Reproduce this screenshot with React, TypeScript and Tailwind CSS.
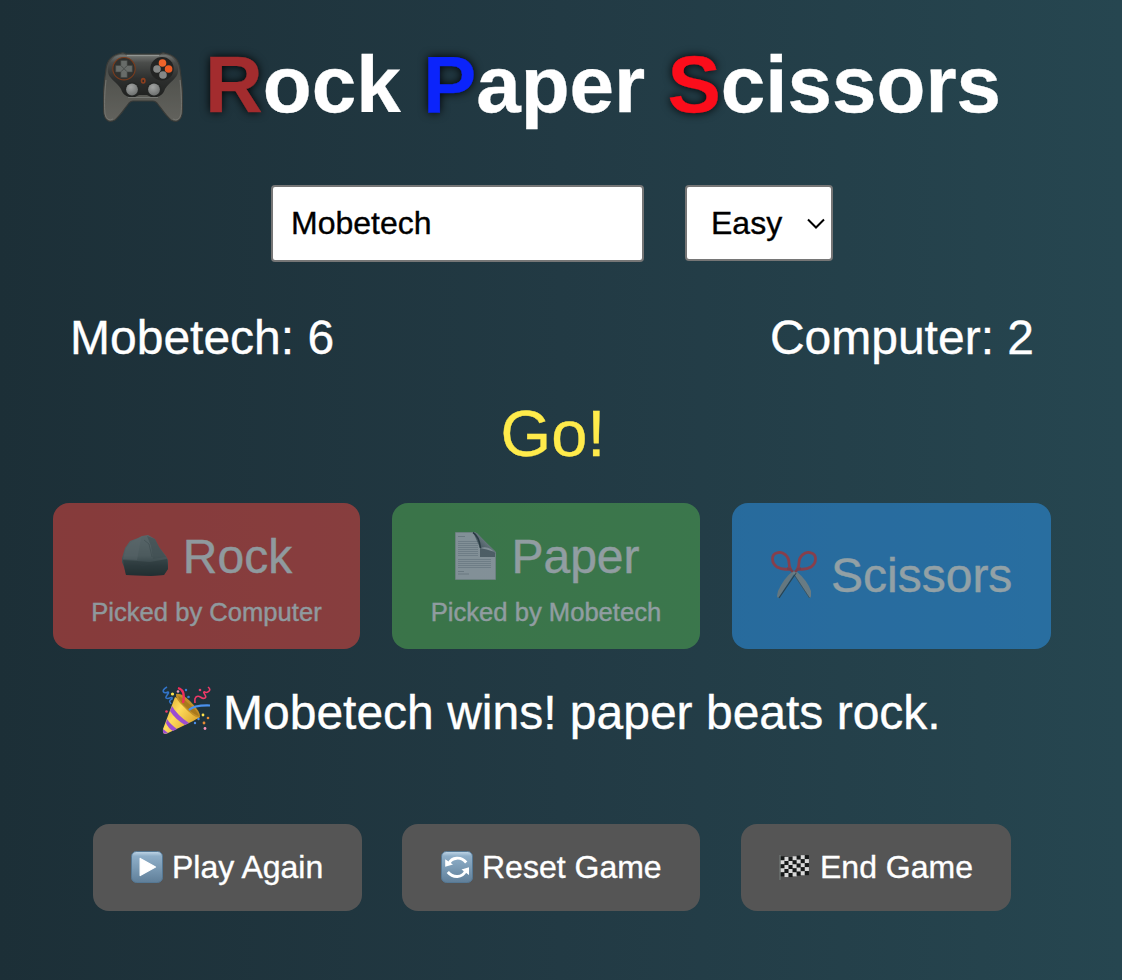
import React from 'react';

function Controller() {
  return (
    <svg viewBox="0 0 80 72" className="h-[72px] w-20 shrink-0" aria-label="game controller">
      <defs>
        <linearGradient id="padShell" x1="0" y1="0" x2="0" y2="1">
          <stop offset="0" stopColor="#5d605c" />
          <stop offset=".12" stopColor="#484a48" />
          <stop offset=".5" stopColor="#555651" />
          <stop offset="1" stopColor="#62625d" />
        </linearGradient>
        <linearGradient id="padFace" x1="0" y1="0" x2="0" y2="1">
          <stop offset="0" stopColor="#747774" />
          <stop offset=".18" stopColor="#4b4d4b" />
          <stop offset=".55" stopColor="#2e302f" />
          <stop offset="1" stopColor="#202120" />
        </linearGradient>
        <radialGradient id="padStick" cx=".4" cy=".3" r=".7">
          <stop offset="0" stopColor="#a2a4a3" />
          <stop offset="1" stopColor="#6f7271" />
        </radialGradient>
      </defs>
      <path d="M17 1.5Q20 0 23 2H57Q60 0 63 1.5C71 3 76 8 77 17C79 30 80.5 50 79 62C78 69 73 71 68 68C63 64 58 56 54 51Q52 49 50 49H30Q28 49 26 51C22 56 17 64 12 68C7 71 2 69 1 62C-.5 50 1 30 3 17C4 8 9 3 17 1.5Z" fill="url(#padShell)" stroke="#383a37" strokeWidth="1.1" />
      <path d="M3 28C1.5 42 1.2 54 2 62Q4 70 10 67M77 28C78.5 42 78.8 54 78 62Q76 70 70 67" fill="none" stroke="#777772" strokeWidth=".9" />
      <path d="M17 3H63C71 4 76 13 75 20C74 27 67 29 62 37C60 44 54 46 48 45L44 43H36L32 45C26 46 20 44 18 37C13 29 6 27 5 20C4 13 9 4 17 3Z" fill="url(#padFace)" />
      <path d="M25 45.5H55" stroke="#757773" strokeWidth="1" />
      <path d="M24 3.5H56" stroke="#929592" strokeWidth="1.2" />
      <circle cx="21" cy="16.7" r="11.2" fill="#30312f" stroke="#7a3c1d" strokeWidth="1.1" />
      <path d="M17.8 8.5H24.2V13.5H29.3V20H24.2V25.5H17.8V20H12.7V13.5H17.8Z" fill="#686c69" stroke="#414542" strokeWidth=".6" />
      <path d="M18 13.7 21 16.7 24 13.7M18 19.7 21 16.7 24 19.7" fill="none" stroke="#484c49" strokeWidth="1" />
      <circle cx="59" cy="16.7" r="11.7" fill="#232423" />
      <circle cx="59.5" cy="11" r="3.8" fill="#ee642b" />
      <circle cx="65.6" cy="17" r="3.8" fill="#eb5b24" />
      <circle cx="54" cy="17" r="3.8" fill="#858786" />
      <circle cx="60" cy="23" r="3.8" fill="#858786" />
      <ellipse cx="40.2" cy="28.8" rx="2.5" ry="3" fill="#8c3e1e" />
      <ellipse cx="40.2" cy="29" rx=".8" ry="1.3" fill="#292a29" />
      <circle cx="29" cy="37.5" r="7.3" fill="#242625" />
      <circle cx="29" cy="37.5" r="5.9" fill="url(#padStick)" />
      <circle cx="51" cy="37.5" r="7.3" fill="#242625" />
      <circle cx="51" cy="37.5" r="5.9" fill="url(#padStick)" />
    </svg>
  );
}

function RockIcon() {
  return (
    <svg viewBox="0 0 48 42" className="h-[42px] w-12 shrink-0" aria-label="rock">
      <defs>
        <linearGradient id="stone" x1="0" y1="0" x2="0" y2="1">
          <stop offset="0" stopColor="#929997" />
          <stop offset=".5" stopColor="#7b8381" />
          <stop offset=".75" stopColor="#4b5351" />
          <stop offset="1" stopColor="#292f2e" />
        </linearGradient>
      </defs>
      <path d="M1 23 4 13 9 6 17 3 21 1 27 0 34 4 38 12 45 21 47 25 47 34 43 40 30 41 5 40 3 32 1 27Z" fill="url(#stone)" />
      <path d="M21 1 19 9 16 25 2 24 5 13 10 7Z" fill="#a1a6a4" opacity=".3" />
      <path d="M26 1 30 11 32 24 45 22 38 12 34 4Z" fill="#59625f" opacity=".5" />
      <path d="M2 25 16 26 29 27 46 24 47 34 43 40 30 41 5 40Z" fill="#202423" opacity=".35" />
      <path d="M23 5 28 9 31 22M16 26 21 31 30 28" fill="none" stroke="#444b49" strokeWidth=".7" opacity=".55" />
    </svg>
  );
}

function PaperIcon() {
  const lines = [9, 11, 13, 15, 17, 19, 21, 23, 27, 29, 31, 33, 35];
  return (
    <svg viewBox="0 0 41 48" className="h-12 w-[41px] shrink-0" aria-label="paper">
      <defs>
        <linearGradient id="fold" x1="0" y1="1" x2="1" y2="0">
          <stop offset="0" stopColor="#344249" />
          <stop offset=".4" stopColor="#848e94" />
          <stop offset=".8" stopColor="#dce2e6" />
        </linearGradient>
      </defs>
      <path d="M.5.5H20L40.5 20V47.5H.5Z" fill="#e3e7ec" stroke="#c2c7cb" strokeWidth=".7" />
      <path d="M3 4.5H10M3 39.5H9M3 42H14" stroke="#9ca6ae" strokeWidth=".7" />
      {lines.map((y) => (
        <path key={y} d={y < 25 ? `M3 ${y + 0.5}H23` : `M3 ${y + 0.5}H36`} stroke="#a8b2ba" strokeWidth=".7" />
      ))}
      <path d="M18 0Q24 4 25 15V25H40V20Q31 17 25 16Z" fill="#4c5960" opacity=".7" />
      <path d="M18 .5Q25 5 25 16Q35 13 40.5 22V20L22 1Z" fill="url(#fold)" />
      <path d="M18 .5Q24 4 25.5 16" fill="none" stroke="#303d43" strokeWidth="1.6" />
    </svg>
  );
}

function ScissorsIcon() {
  return (
    <svg viewBox="0 0 46 48" className="h-12 w-[46px] shrink-0" aria-label="scissors">
      <path d="M21 20 38 46Q39.5 48 40 45V40Q36 29 25 20Z" fill="#adb8bd" />
      <path d="M22 22 38.5 47" stroke="#526875" strokeWidth=".9" />
      <path d="M25 20 8 46Q6.5 48 6 45L7 40Q13 27 22 20Z" fill="#a5b0b6" />
      <path d="M25 22 8 47" stroke="#34444e" strokeWidth="1.2" />
      <path d="M18 18Q11 19 6 16C0 12 0 3 6 1.8C12 0 18 5 18 12Q18 16 20 19M28 18Q35 19 40 16C46 12 46 3 40 1.8C34 0 28 5 28 12Q28 16 26 19" fill="none" stroke="#e94050" strokeWidth="2.8" />
      <path d="M16 17.5Q20 18 22 21M30 17.5Q26 18 24 21" fill="none" stroke="#c94151" strokeWidth="2.5" />
      <circle cx="23" cy="22" r="1.5" fill="#aebcc4" />
    </svg>
  );
}

function PartyIcon() {
  return (
    <svg viewBox="0 0 50 50" className="h-[50px] w-[50px] shrink-0" aria-label="celebration">
      <defs>
        <linearGradient id="cone" x1="0" y1="0" x2="1" y2=".7">
          <stop offset="0" stopColor="#d59b20" />
          <stop offset=".45" stopColor="#ffdc5c" />
          <stop offset="1" stopColor="#d79c24" />
        </linearGradient>
      </defs>
      <path d="M13 11Q22 16 30 25Q36 31 38 31Q32 35 6 47Q0 50 1 43Z" fill="url(#cone)" />
      <path d="M14 8Q19 6 28 15Q39 26 38 31Q33 33 22 21Q13 13 14 8Z" fill="#c18e27" />
      <path d="M16 10Q17 15 26 23Q34 30 37 30Q35 24 26 17Q19 10 16 10Z" fill="#a9791c" />
      <path d="M10 20Q15 29 27 37L23 39Q13 33 8 25ZM5 33Q8 38 15 43L11 45Q6 42 4 37ZM1 43 6 47Q1 49 1 46Z" fill="#9b4ed0" />
      <path d="M16 2Q24 4 21 17" fill="none" stroke="#f12e5b" strokeWidth="2.3" />
      <path d="M27 24Q32 19 48 19.5" fill="none" stroke="#4b91ec" strokeWidth="2.2" />
      <path d="M5 1C-2 5 2 8 6 6C8 7 3 10 4 12C7 14 11 9 10 13C6 15 8 16 9 18" fill="none" stroke="#3274c9" strokeWidth="1.5" />
      <path d="M46 1C51 5 44 7 43 6C39 5 46 11 43 12C39 14 38 8 34 11C32 13 33 14 33 17" fill="none" stroke="#ed3a68" strokeWidth="1.6" />
      <g>
        <circle cx="10.5" cy="8" r="1.6" fill="#ffe44d" />
        <circle cx="16" cy="5.5" r="1.3" fill="#ee9eb9" />
        <circle cx="24" cy="4" r="1.2" fill="#397dd6" />
        <circle cx="26.5" cy="11" r="1.3" fill="#397dd6" />
        <circle cx="38" cy="4" r="1.3" fill="#ed3a68" />
        <circle cx="4.5" cy="25.5" r="1.3" fill="#ed3a68" />
        <circle cx="36.5" cy="33" r="1.2" fill="#4b8eea" />
        <circle cx="41" cy="29" r="1.4" fill="#ffe44d" />
        <circle cx="46" cy="32" r="1.3" fill="#e88b32" />
        <circle cx="42" cy="37" r="1.4" fill="#e88b32" />
        <circle cx="33" cy="37" r="1.2" fill="#4b8eea" />
        <circle cx="43" cy="42.5" r="1.4" fill="#f592ba" />
      </g>
    </svg>
  );
}

function Tile({ kind }: { kind: 'play' | 'reset' }) {
  return (
    <svg viewBox="0 0 32 32" className="-mt-[2px] size-8 shrink-0" aria-hidden="true">
      <defs>
        <linearGradient id={`tile-${kind}`} x1="0" y1="0" x2="0" y2="1">
          <stop offset="0" stopColor="#c2d7e7" />
          <stop offset=".15" stopColor="#8eaec8" />
          <stop offset=".55" stopColor="#7999b3" />
          <stop offset="1" stopColor="#607f99" />
        </linearGradient>
      </defs>
      <rect x=".5" y=".5" width="31" height="31" rx="5" fill={`url(#tile-${kind})`} stroke="#557894" />
      {kind === 'play' ? (
        <path d="M9.2 7.5 24.5 16 9.2 24.5Z" fill="#fff" stroke="#fff" strokeWidth="1.3" strokeLinejoin="round" />
      ) : (
        <g fill="none" stroke="#fff" strokeWidth="2.9">
          <path d="M8 12.5C10.5 6.2 20 5 25.2 11.5" />
          <path d="M24.5 20C21.5 27 12 27.3 6.8 21" />
          <path d="M4.2 8.2V15.7L12 13.5ZM28 16.2V24L20.5 18.5Z" fill="#fff" stroke="none" />
        </g>
      )}
    </svg>
  );
}

function FlagIcon() {
  const cells: React.ReactElement[] = [];
  for (let r = 0; r < 5; r++) {
    for (let c = 0; c < 7; c++) {
      const bend = [1.3, 2, 2, 1.3, 0.6, 0.2, 0.1][c];
      cells.push(
        <rect key={`${r}-${c}`} x={1.5 + c * 4.05} y={bend + r * 4} width="4.1" height="4.05" fill={(r + c) % 2 ? '#d8d8d8' : '#171919'} />,
      );
    }
  }
  return (
    <svg viewBox="0 0 30 25" className="h-[25px] w-[30px] shrink-0" aria-hidden="true">
      {cells}
      <path d="M1 0V25" stroke="#78817f" strokeWidth="1" />
    </svg>
  );
}

function ActionButton({ className, children }: { className: string; children: React.ReactNode }) {
  return (
    <button className={`flex h-[87px] items-center rounded-2xl bg-[#555] text-[32px] leading-[36px] ${className}`}>
      {children}
    </button>
  );
}

export default function App() {
  return (
    <main className="flex h-[980px] w-[1122px] flex-col overflow-hidden bg-linear-to-r from-[#1c2f37] via-[#223a44] to-[#264650] font-['Liberation_Sans',Arial,sans-serif] text-white [-webkit-text-stroke:0.35px]">
      <h1 className="flex h-[130px] items-start pt-[39px] pl-[103px] text-[80px] leading-[92px] font-bold whitespace-pre">
        <span className="mt-[13px] mr-[22px] flex"><Controller /></span>
        <span>
          <span className="text-[#a32c2e] [text-shadow:0_0_10px_#000]">R</span>ock{' '}
          <span className="text-[#0b24fb] [text-shadow:0_0_10px_#000]">P</span>aper{' '}
          <span className="text-[#fc0d1b] [text-shadow:0_0_10px_#000]">S</span>cissors
        </span>
      </h1>

      <div className="mt-[55px] flex h-[77px] items-start gap-[41px] pl-[271px] text-[32px] text-black">
        <input aria-label="Player" defaultValue="Mobetech" className="h-[77px] w-[373px] rounded-[4px] border-2 border-[#767676] bg-white px-[18px]" />
        <div className="grid h-[76px] w-[148px]">
          <select aria-label="Difficulty" defaultValue="Easy" className="col-start-1 row-start-1 appearance-none rounded-[4px] border-2 border-[#767676] bg-white pl-6">
            <option>Easy</option>
          </select>
          <svg viewBox="0 0 18 12" className="pointer-events-none col-start-1 row-start-1 mt-[2px] mr-2 h-3 w-[18px] self-center justify-self-end" fill="none" stroke="#000" strokeWidth="2">
            <path d="m1 1.5 8 8 8-8" />
          </svg>
        </div>
      </div>

      <div className="mt-[48px] flex h-14 items-center justify-between pr-[88px] pl-[70px] text-5xl whitespace-nowrap">
        <span>Mobetech: 6</span>
        <span>Computer: 2</span>
      </div>

      <p className="mt-[32px] mb-px flex h-[72px] items-center justify-center pr-[16px] text-[65px] leading-[72px] text-[#ffeb4b]">Go!</p>

      <div className="mt-[32px] flex h-[146px] gap-8 pl-[53px] text-5xl">
        <button className="flex w-[307px] flex-col items-center rounded-2xl bg-[#ee463e] pt-[26px] opacity-50">
          <span className="flex h-[56px] items-center gap-[14px]"><span className="-mt-[3px] flex"><RockIcon /></span><span>Rock</span></span>
          <span className="mt-[12px] text-[25.6px] leading-[30px]">Picked by Computer</span>
        </button>
        <button className="flex w-[308px] flex-col items-center rounded-2xl bg-[#54b152] pt-[26px] opacity-50">
          <span className="flex h-[56px] items-center gap-[15px] pl-[3px]"><span className="-mt-[3px] flex"><PaperIcon /></span><span>Paper</span></span>
          <span className="mt-[12px] text-[25.6px] leading-[30px]">Picked by Mobetech</span>
        </button>
        <button className="flex w-[319px] items-center rounded-2xl bg-[#2c98f2] pl-[39px] opacity-50">
          <span className="-mt-[3px] flex"><ScissorsIcon /></span><span className="ml-[14px]">Scissors</span>
        </button>
      </div>

      <div className="mt-[36px] flex h-14 items-center gap-[11px] pl-[162px] text-5xl whitespace-nowrap">
        <span className="-mt-[4px] flex"><PartyIcon /></span><span>Mobetech wins! paper beats rock.</span>
      </div>

      <div className="mt-[83px] flex pl-[93px] whitespace-nowrap">
        <ActionButton className="w-[269px] gap-[9px] pl-[38px]"><Tile kind="play" /><span className="-mt-[2px]">Play Again</span></ActionButton>
        <ActionButton className="ml-10 w-[298px] gap-[9px] pl-[39px]"><Tile kind="reset" /><span className="-mt-[2px]">Reset Game</span></ActionButton>
        <ActionButton className="ml-[41px] w-[270px] gap-[11px] pl-[38px]"><FlagIcon /><span className="-mt-[2px]">End Game</span></ActionButton>
      </div>
    </main>
  );
}
